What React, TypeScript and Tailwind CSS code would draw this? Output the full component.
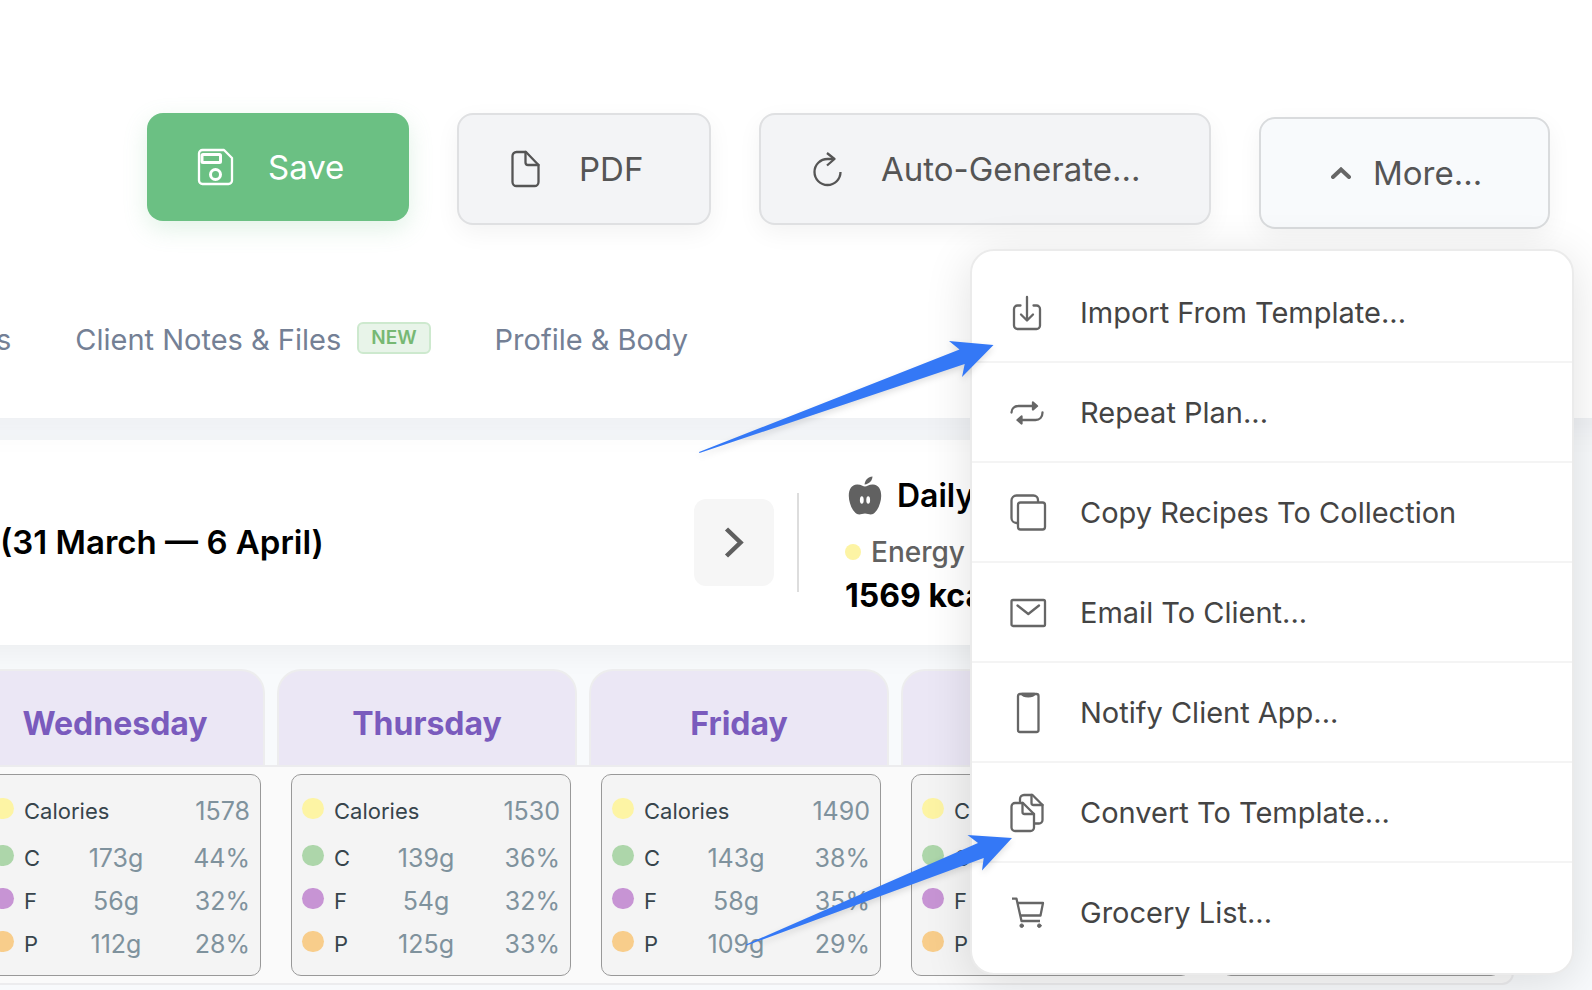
import type { ReactNode } from 'react';

interface Macro {
  label: string;
  grams: string;
  percent: string;
  dot: string;
}

interface Day {
  name: string;
  calories: string;
  macros: Macro[];
}

const DOTS = {
  C: 'bg-[#add6aa]',
  F: 'bg-[#c794d4]',
  P: 'bg-[#f8cd8b]',
};

function makeDay(name: string, calories = '', c = ['', ''], f = ['', ''], p = ['', '']): Day {
  return {
    name,
    calories,
    macros: [
      { label: 'C', grams: c[0], percent: c[1], dot: DOTS.C },
      { label: 'F', grams: f[0], percent: f[1], dot: DOTS.F },
      { label: 'P', grams: p[0], percent: p[1], dot: DOTS.P },
    ],
  };
}

const DAYS: Day[] = [
  makeDay('Wednesday', '1578', ['173g', '44%'], ['56g', '32%'], ['112g', '28%']),
  makeDay('Thursday', '1530', ['139g', '36%'], ['54g', '32%'], ['125g', '33%']),
  makeDay('Friday', '1490', ['143g', '38%'], ['58g', '35%'], ['109g', '29%']),
  makeDay('Saturday'),
  makeDay('Sunday'),
];

function Icon({ children }: { children: ReactNode }) {
  return (
    <svg
      viewBox="0 0 36 36"
      className="h-9 w-9 shrink-0 overflow-visible"
      fill="none"
      stroke="currentColor"
      strokeWidth="2.3"
      strokeLinecap="round"
      strokeLinejoin="round"
      aria-hidden="true"
    >
      {children}
    </svg>
  );
}

const ImportIcon = () => (
  <Icon>
    <path d="M10.5 11.5H7.500A3.500 3.500 0 0 0 4 15V31.500a3.500 3.500 0 0 0 3.500 3.500H26.500a3.500 3.500 0 0 0 3.500-3.500V15A3.500 3.500 0 0 0 26.500 11.500H23.500" />
    <path d="M17 3V26M11 20.500L17 26.500L23 20.500" />
  </Icon>
);

const RepeatIcon = () => (
  <Icon>
    <path d="M1.500 18.500C1.500 14.500 4.500 12 8.500 12H26M23 8.500L27 12L23 15.500Z" />
    <path d="M32.500 18.500C32.500 23 29.500 26 25.500 26H8.500M11.500 22.500L7.500 26L11.500 29.500Z" />
  </Icon>
);

const CopyIcon = () => (
  <Icon>
    <path d="M8 29H6.500A5 5 0 0 1 1.500 24V6.500A5 5 0 0 1 6.500 1.500H23.500A4.500 4.500 0 0 1 28 6V7.500" />
    <rect x="8" y="8.500" width="27" height="27" rx="2.500" />
  </Icon>
);

const MailIcon = () => (
  <Icon>
    <rect x="1.500" y="6" width="33.500" height="26" rx="1.500" />
    <path d="M7.500 11.500L18.300 20L29 11.500" />
  </Icon>
);

const PhoneIcon = () => (
  <Icon>
    <rect x="8" y="0" width="20.500" height="38" rx="2" />
    <path d="M12 0C13.500 3 23 3 24.500 0Z" fill="currentColor" />
  </Icon>
);

const ConvertIcon = () => (
  <Icon>
    <path d="M10 7.500V5A4 4 0 0 1 14 1H22.500L32.500 11V26A3.500 3.500 0 0 1 29 29.500H24.500" />
    <path d="M21.500 1V9A2 2 0 0 0 23.500 11H32.500" />
    <path d="M13 9H5A3.500 3.500 0 0 0 1.500 12.500V33.500A3.500 3.500 0 0 0 5 37H20.500A3.500 3.500 0 0 0 24 33.500V20Z" />
    <path d="M12.500 9V18A2 2 0 0 0 14.500 20H24" />
  </Icon>
);

const CartIcon = () => (
  <Icon>
    <path d="M2 4.700H6.500L11.500 27H30M7.500 9H33L30.500 21.500H10.500" strokeLinecap="butt" />
    <circle cx="11.700" cy="31.700" r="1.800" fill="currentColor" strokeWidth="1" />
    <circle cx="29.300" cy="31.700" r="1.800" fill="currentColor" strokeWidth="1" />
  </Icon>
);

const MENU_ITEMS = [
  { label: 'Import From Template...', icon: <ImportIcon /> },
  { label: 'Repeat Plan...', icon: <RepeatIcon /> },
  { label: 'Copy Recipes To Collection', icon: <CopyIcon /> },
  { label: 'Email To Client...', icon: <MailIcon /> },
  { label: 'Notify Client App...', icon: <PhoneIcon /> },
  { label: 'Convert To Template...', icon: <ConvertIcon /> },
  { label: 'Grocery List...', icon: <CartIcon /> },
];

function MoreMenu() {
  return (
    <div
      role="menu"
      className="absolute top-full -right-6 mt-5 w-[604px] rounded-3xl border-2 border-[#ebebeb] bg-white py-3 shadow-[0_8px_48px_rgba(0,0,0,0.12)]"
    >
      {MENU_ITEMS.map((item) => (
        <button
          key={item.label}
          type="button"
          role="menuitem"
          className="flex h-[100px] w-full items-center gap-[34px] border-b-2 border-[#f4f4f4] pl-[38px] text-left text-[29px] text-[#444444] last:h-[98px] last:border-b-0"
        >
          <span className="text-[#666666]">{item.icon}</span>
          <span className="pt-[2px]">{item.label}</span>
        </button>
      ))}
    </div>
  );
}

function Toolbar() {
  const plain =
    'flex h-28 items-center rounded-2xl border-2 border-[#dfe0e2] bg-[#f3f4f6] text-[33px] text-[#555555] shadow-[0_8px_24px_rgba(0,0,0,0.05)]';
  return (
    <div className="flex items-start justify-end gap-12 pr-[42px]">
      <button
        type="button"
        className="flex h-[108px] w-[262px] items-center gap-[35px] rounded-2xl bg-[#6bc083] pl-[50px] text-[33px] text-white shadow-[0_8px_24px_rgba(107,192,131,0.2)]"
      >
        <Icon>
          <path d="M5.500 1H27L35 9V31.500A3.500 3.500 0 0 1 31.500 35H5.500A3.500 3.500 0 0 1 2 31.500V4.500A3.500 3.500 0 0 1 5.500 1Z" />
          <rect x="5" y="5.500" width="18.500" height="8" rx="1" strokeWidth="3" />
          <circle cx="18.500" cy="25.500" r="5" strokeWidth="3" />
        </Icon>
        <span className="pt-[2px]">Save</span>
      </button>
      <button type="button" className={`${plain} w-[254px] gap-9 pl-12`}>
        <Icon>
          <path d="M19 1H9.500A4 4 0 0 0 5.500 5V31A4 4 0 0 0 9.500 35H27.500A4 4 0 0 0 31.500 31V14Z" />
          <path d="M18.500 1V11.500A2.500 2.500 0 0 0 21 14H31.500" />
        </Icon>
        <span className="pt-[2px]">PDF</span>
      </button>
      <button type="button" className={`${plain} w-[452px] gap-9 pl-12`}>
        <Icon>
          <path d="M31.500 21A13 13 0 1 1 18.500 8H25" strokeLinecap="butt" />
          <path d="M18 2L25.500 8L18 14.500" strokeLinecap="butt" />
        </Icon>
        <span className="pt-[2px]">Auto-Generate...</span>
      </button>
      <div className="relative z-20 mt-1">
        <button
          type="button"
          aria-haspopup="menu"
          aria-expanded="true"
          className="flex h-28 w-[291px] items-center gap-[22px] rounded-2xl border-2 border-[#d9dbdd] bg-[#f8fafc] pl-[70px] text-[33px] text-[#555555] shadow-[0_8px_24px_rgba(0,0,0,0.05)]"
        >
          <svg viewBox="0 0 20 12" className="h-3 w-5" fill="none" stroke="#666666" strokeWidth="4" strokeLinecap="round" aria-hidden="true">
            <path d="M2 10L10 2.500L18 10" />
          </svg>
          <span className="pt-[2px]">More...</span>
        </button>
        <MoreMenu />
      </div>
    </div>
  );
}

function Tabs() {
  return (
    <nav className="mt-[87px] flex h-12 items-center gap-16 text-[29px] text-[#748095]">
      <a href="#plans" className="-ml-1">
        s
      </a>
      <a href="#notes" className="flex items-center gap-4">
        Client Notes &amp; Files
        <span className="mb-1 flex h-8 items-center rounded-md border-2 border-[#cde9ce] bg-[#e8f4e9] px-3 text-[19px] font-semibold text-[#77b873]">
          NEW
        </span>
      </a>
      <a href="#profile">Profile &amp; Body</a>
    </nav>
  );
}

function WeekBar() {
  return (
    <section className="mt-[22px] -ml-12 flex h-[205px] items-center overflow-hidden bg-white pl-12 shadow-[0_8px_28px_rgba(0,0,0,0.05)]">
      <div className="flex h-[99px] w-[799px] items-center border-r-2 border-[#dddddd]">
        <h2 className="flex-1 text-[33px] font-semibold text-black">(31 March — 6 April)</h2>
        <button
          type="button"
          aria-label="Next week"
          className="mr-[23px] flex h-[87px] w-20 items-center justify-center rounded-xl bg-[#f6f6f6]"
        >
          <svg viewBox="0 0 20 32" className="h-8 w-5" fill="none" stroke="#5f5f5f" strokeWidth="4.500" aria-hidden="true">
            <path d="M2.500 2L16.500 15.500L2.500 29" />
          </svg>
        </button>
      </div>
      <div className="ml-[46px] pt-[6px] text-[32px] leading-10 text-black">
        <h3 className="flex items-center gap-[15px] font-semibold">
          <svg viewBox="0 0 34 40" className="ml-[3px] h-10 w-[34px]" fill="#616161" aria-hidden="true">
            <path d="M17 10.500C19 10.500 21 8.300 25 8.500C30.500 8.800 33.300 13.500 33.200 20C33.100 27 29.500 35.500 25 38C22 39.200 20 37.500 17 37.500C14 37.500 12 39.200 9 38C4.500 35.500 0.900 27 0.800 20C0.700 13.500 3.500 8.800 9 8.500C13 8.300 15 10.500 17 10.500Z" />
            <path d="M16.500 8.500C17 4 20 1 24.500 0.500C24.300 4.500 21.500 8 16.500 8.500Z" />
            <ellipse cx="13.800" cy="24" rx="1.900" ry="3.800" fill="#ffffff" />
            <ellipse cx="20.200" cy="24" rx="1.900" ry="3.800" fill="#ffffff" />
          </svg>
          Daily
        </h3>
        <p className="mt-4 flex items-center gap-[10px] text-[28px] font-medium text-[#616161]">
          <span className="h-4 w-4 rounded-full bg-[#fdf4a4]" />
          Energy
        </p>
        <p className="mt-1 font-bold">1569 kcal</p>
      </div>
    </section>
  );
}

function Dot({ color }: { color: string }) {
  return <span className={`mr-[10px] mb-[6px] h-[21px] w-[22px] shrink-0 rounded-full ${color}`} />;
}

function DayCard({ day }: { day: Day }) {
  return (
    <article className="h-[202px] w-[280px] shrink-0 rounded-[10px] border border-[#999999] bg-[#f4f4f4] px-[10px] pt-[15px] text-[22px] text-[#37444c]">
      <div className="mb-1 flex h-[43px] items-center">
        <Dot color="bg-[#fdf4a4]" />
        <span className="flex-1">Calories</span>
        <span className="text-[25px] text-[#7f929d]">{day.calories}</span>
      </div>
      {day.macros.map((macro) => (
        <div key={macro.label} className="flex h-[43px] items-center">
          <Dot color={macro.dot} />
          <span className="w-12">{macro.label}</span>
          <span className="w-[88px] text-center text-[25px] text-[#7f929d]">{macro.grams}</span>
          <span className="flex-1 text-right text-[25px] text-[#7f929d]">{macro.percent}</span>
        </div>
      ))}
    </article>
  );
}

function WeekGrid() {
  return (
    <section className="mt-6">
      <div className="flex justify-end gap-3 overflow-hidden pr-px">
        {DAYS.map((day) => (
          <h3
            key={day.name}
            className="flex h-24 w-[300px] shrink-0 items-center justify-center rounded-t-3xl border-2 border-b-0 border-[#ededee] bg-[#ebe7f5] pt-3 text-[32px] font-bold text-[#7a5bbd]"
          >
            {day.name}
          </h3>
        ))}
      </div>
      <div className="flex justify-end gap-[30px] overflow-hidden rounded-br-xl border-2 border-l-0 border-[#ececee] bg-[#fafafa] py-[7px] pr-[11px]">
        {DAYS.map((day) => (
          <DayCard key={day.name} day={day} />
        ))}
      </div>
    </section>
  );
}

function Arrows() {
  return (
    <svg
      viewBox="699 330 320 620"
      className="pointer-events-none absolute top-[330px] left-[699px] z-30 h-[620px] w-80 drop-shadow-md"
      fill="#3478f6"
      aria-hidden="true"
    >
      <path d="M699 452L959.500 349.500L949 341L993.500 345L962 377L964.700 364L699.500 453Z" />
      <path d="M746 944.500L978 843L967.500 835L1012 838L982 870.500L983.700 858L746.500 945.500Z" />
    </svg>
  );
}

export default function App() {
  return (
    <div className="relative min-h-screen overflow-hidden bg-[#f8fafc] font-['Inter',sans-serif]">
      <header className="relative z-10 -mx-12 h-[418px] bg-white px-12 pt-[113px] shadow-[0_4px_36px_rgba(30,30,60,0.07)]">
        <Toolbar />
        <Tabs />
      </header>
      <main className="pr-[78px]">
        <WeekBar />
        <WeekGrid />
      </main>
      <Arrows />
    </div>
  );
}
